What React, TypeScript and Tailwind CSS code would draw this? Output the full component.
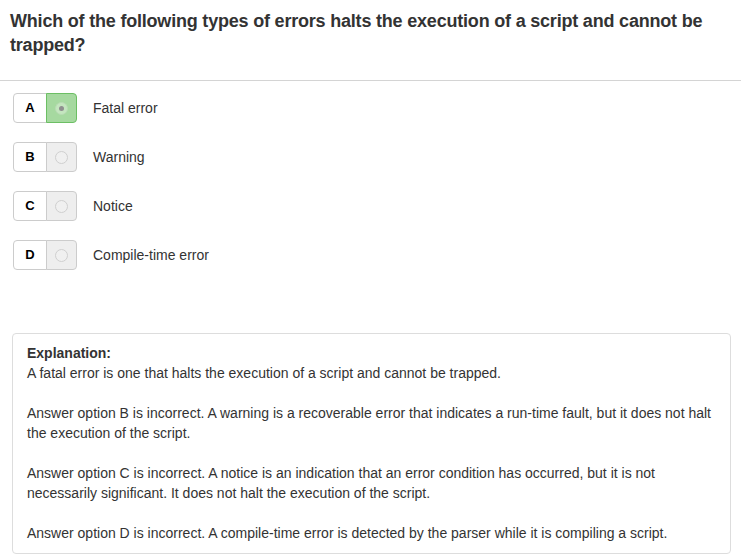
import React from "react";

const FONT = "font-['Liberation_Sans',Arial,Helvetica,sans-serif]";

type Opt = { letter: string; text: string; selected?: boolean };

const options: Opt[] = [
  { letter: "A", text: "Fatal error", selected: true },
  { letter: "B", text: "Warning" },
  { letter: "C", text: "Notice" },
  { letter: "D", text: "Compile-time error" },
];

function OptionRow({ o }: { o: Opt }) {
  return (
    <div className="flex items-center gap-[16px]">
      <div className="flex h-[30px] w-[64px]">
        <div className="flex w-[34px] items-center justify-center rounded-l-[4px] border border-[#cccccc] bg-white text-[13px] font-bold text-black">
          {o.letter}
        </div>
        <div
          className={
            o.selected
              ? "-ml-px flex w-[31px] items-center justify-center rounded-r-[4px] border border-[#6cbf64] bg-[#a6d9a0]"
              : "-ml-px flex w-[31px] items-center justify-center rounded-r-[4px] border border-[#cccccc] bg-[#eeeeee]"
          }
        >
          <div
            className={
              o.selected
                ? "flex h-[13px] w-[13px] items-center justify-center rounded-full border border-[#b9dcb4] bg-[#c4e6bf]"
                : "flex h-[13px] w-[13px] items-center justify-center rounded-full border border-[#cfcfcf] bg-[#f0f0f0]"
            }
          >
            {o.selected && <div className="h-[5px] w-[5px] rounded-full bg-[#8f8f8f]" />}
          </div>
        </div>
      </div>
      <span className="text-[14px] text-[#333333]">{o.text}</span>
    </div>
  );
}

export default function App() {
  return (
    <div className={`${FONT} h-[555px] w-[749px] overflow-hidden bg-white text-[#333333]`}>
      <h1 className="px-[10px] pt-[9px] text-[18px] font-bold leading-[24px] tracking-[-0.2px] text-[#333333]">
        Which of the following types of errors halts the execution of a script and cannot be trapped?
      </h1>
      <div className="mt-[23px] mr-[8px] h-px bg-[#d4d4d4]" />
      <div className="ml-[13px] mt-[12px] flex flex-col gap-[19px]">
        {options.map((o) => (
          <OptionRow key={o.letter} o={o} />
        ))}
      </div>
      <div className="ml-[12px] mt-[63px] w-[719px] rounded-[4px] border border-[#dddddd] px-[14px] pt-[9px] pb-[10px] text-[14px] leading-[20px] text-[#333333]">
        <div className="font-bold">Explanation:</div>
        <div>A fatal error is one that halts the execution of a script and cannot be trapped.</div>
        <div className="mt-[20px]">
          Answer option B is incorrect. A warning is a recoverable error that indicates a run-time fault, but it does not halt the execution of the script.
        </div>
        <div className="mt-[20px]">
          Answer option C is incorrect. A notice is an indication that an error condition has occurred, but it is not necessarily significant. It does not halt the execution of the script.
        </div>
        <div className="mt-[20px]">
          Answer option D is incorrect. A compile-time error is detected by the parser while it is compiling a script.
        </div>
      </div>
    </div>
  );
}
